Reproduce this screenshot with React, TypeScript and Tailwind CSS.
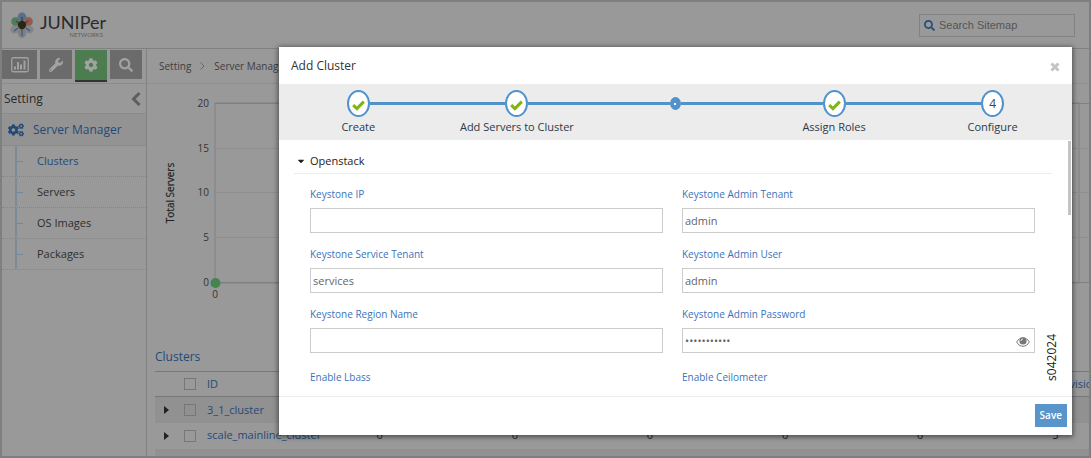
import React from "react";
import { FaCaretDown, FaCog, FaCogs, FaSearch, FaWrench } from "react-icons/fa";

const menu = ["Clusters", "Servers", "OS Images", "Packages"];
const clusters = [
  { name: "3_1_cluster", counts: ["0", "0", "0", "0", "0", ""] },
  { name: "scale_mainline_cluster", counts: ["0", "0", "0", "0", "0", "5"] },
  { name: "", counts: ["", "", "", "", "", ""] },
];
const steps = [
  { label: "Create", state: "done" },
  { label: "Add Servers to Cluster", state: "done" },
  { label: "", state: "dot" },
  { label: "Assign Roles", state: "done" },
  { label: "Configure", state: "current" },
];
const fields = [
  { id: "ip", label: "Keystone IP", value: "", type: "text" },
  { id: "tenant", label: "Keystone Admin Tenant", value: "admin", type: "text" },
  { id: "service", label: "Keystone Service Tenant", value: "services", type: "text" },
  { id: "user", label: "Keystone Admin User", value: "admin", type: "text" },
  { id: "region", label: "Keystone Region Name", value: "", type: "text" },
  { id: "password", label: "Keystone Admin Password", value: "contrail123", type: "password" },
];
const ticks = [
  { label: "20", y: 19 },
  { label: "15", y: 64 },
  { label: "10", y: 108 },
  { label: "5", y: 153 },
  { label: "0", y: 198 },
];

function Logo() {
  return (
    <a href="#home" aria-label="Juniper Networks" className="flex items-center gap-[6px] text-[#2b2b2b]">
      <svg width="24" height="28" viewBox="0 0 24 28">
        <g stroke="#858585" strokeWidth="0.4">
          <ellipse cx="5.500" cy="18" rx="4" ry="5" fill="#81868b" transform="rotate(60 5.500 18)" />
          <ellipse cx="18.500" cy="18" rx="4" ry="5" fill="#81848a" transform="rotate(-60 18.500 18)" />
          <ellipse cx="12" cy="22" rx="4" ry="5" fill="#7a8086" />
          <circle cx="12" cy="6" r="4.400" fill="#53708f" />
          <circle cx="5.500" cy="10.500" r="4.400" fill="#4f7d5c" />
          <circle cx="18.500" cy="10.500" r="4.400" fill="#955a50" />
        </g>
        <path d="M12 6v10M6 10l7 5M18 10l-7 5" stroke="#4d5148" strokeWidth="2" />
        <path d="M12 18v7M16 17l4 3M8 17l-4 3" stroke="#3f5a77" strokeWidth="1.200" />
        <circle cx="12" cy="14" r="4.200" fill="#2c2714" />
      </svg>
      <span className="flex flex-col items-end gap-px font-['Lato',sans-serif]">
        <span className="text-[18px] leading-[18px]">JUNIPer</span>
        <span className="pr-[3px] text-[6px] leading-[6px] text-[#5e5e5e]">NETWORKS</span>
      </span>
    </a>
  );
}

function BarsIcon() {
  return (
    <svg width="18" height="16" viewBox="0 0 18 16" fill="none" stroke="currentColor">
      <rect x="0.750" y="0.750" width="16.500" height="14" rx="1.500" strokeWidth="1.300" />
      <path d="M4 12.500V9.500M7 12.500V5M10 12.500V7.500M13.500 12.500V3.500" strokeWidth="2" />
    </svg>
  );
}

function CheckIcon() {
  return (
    <svg width="13" height="11" viewBox="0 0 13 11" fill="none" stroke="#80b414" strokeWidth="3" className="mt-[3px]">
      <path d="M1.200 5.200L4.900 8.600L11.800 1.600" />
    </svg>
  );
}

function EyeIcon() {
  return (
    <svg width="14" height="12" viewBox="0 0 14 12" fill="none">
      <path d="M0.700 6C3.600 0.300 10.400 0.300 13.300 6C10.400 11.700 3.600 11.700 0.700 6Z" stroke="#777" strokeWidth="1" />
      <circle cx="7" cy="5" r="3.600" fill="#777" />
      <path d="M5 5a2 2 0 0 1 2-2" stroke="#fff" strokeWidth="0.800" />
    </svg>
  );
}

function Sidebar() {
  return (
    <aside className="w-[145px] shrink-0 border-r border-[#828282]">
      <nav className="flex h-[35px] gap-[3px] border-b border-[#8a8a8a] pt-px pr-[4px]" aria-label="Sections">
        <button aria-label="Monitor" className="flex h-[29px] w-[35px] items-center justify-center bg-[#6b6b6b] text-[#a2a2a2]"><BarsIcon /></button>
        <button aria-label="Configure" className="flex h-[29px] flex-1 items-center justify-center bg-[#6b6b6b] text-[#a2a2a2]"><FaWrench size={14} /></button>
        <button aria-label="Setting" className="flex h-[32px] flex-1 items-center justify-center border-b-2 border-[#333] bg-[#4b7d50] text-[#a2a2a2]"><FaCog size={14} /></button>
        <button aria-label="Query" className="flex h-[29px] flex-1 items-center justify-center bg-[#6b6b6b] text-[#a2a2a2]"><FaSearch size={14} /></button>
      </nav>
      <div className="flex h-[30px] items-center justify-between border-b border-[#8a8a8a] pr-[5px] pl-[2px] text-[12px] text-[#2b2b2b]">
        Setting
        <button aria-label="Collapse">
          <svg width="10" height="14" viewBox="0 0 10 14" fill="none" stroke="#5e5e5e" strokeWidth="3"><path d="M8.500 1L2.500 7L8.500 13" /></svg>
        </button>
      </div>
      <a href="#servers" className="flex h-[32px] items-center gap-[9px] border-b border-[#8a8a8a] bg-[#939393] pl-[6px] text-[12px] text-[#1f4a78]">
        <FaCogs size={16} />
        Server Manager
      </a>
      <ul>
        {menu.map((m, i) => (
          <li key={m} className="border-b border-dotted border-[#858585] pl-[13px]">
            <a href={"#" + m} className={"flex h-[30px] items-center gap-[14px] border-l-2 border-[#7b8b98] text-[11px] " + (i === 0 ? "text-[#1f4a78]" : "text-[#2e2e2e]")}>
              <span className="h-px w-[6px] bg-[#71879a]" />
              {m}
            </a>
          </li>
        ))}
      </ul>
    </aside>
  );
}

function Chart() {
  return (
    <svg className="block h-[258px] w-full" role="img" aria-label="Total Servers">
      <rect x="68" y="19" width="864" height="180" fill="none" stroke="#828282" />
      {ticks.map((t) => (
        <g key={t.label}>
          <line x1="68" x2="100%" y1={t.y + 0.5} y2={t.y + 0.5} stroke={t.label === "0" || t.label === "20" ? "#808080" : "#8e8e8e"} />
          <text x="62" y={t.y + 4} textAnchor="end" fontSize="10" fill="#333">{t.label}</text>
        </g>
      ))}
      <text transform="translate(27 109) rotate(-90)" textAnchor="middle" fontSize="10" fill="#222" stroke="#222" strokeWidth="0.200">Total Servers</text>
      <text x="68" y="214" textAnchor="middle" fontSize="10" fill="#333">0</text>
      <circle cx="68.500" cy="199" r="5" fill="#468350" />
    </svg>
  );
}

function Clusters() {
  return (
    <section className="pl-2">
      <h2 className="h-[29px] pt-[7px] text-[12px] leading-4 text-[#1f4a78]">Clusters</h2>
      <table className="w-[968px] table-fixed border-collapse text-[11px]">
        <colgroup>
          <col className="w-[23px]" />
          <col className="w-[29px]" />
          <col className="w-[105px]" />
          {clusters[0].counts.map((_, i) => <col key={i} className="w-[135px]" />)}
        </colgroup>
        <thead>
          <tr className="h-[25px] border-y border-[#777] text-left text-[#1f4a78]">
            <th />
            <th className="px-[6px]"><input type="checkbox" aria-label="Select all" className="block size-3 appearance-none border border-[#777]" /></th>
            <th className="font-normal">ID</th>
            <th /><th /><th /><th /><th />
            <th className="pl-[64px] font-normal">Provisioned</th>
          </tr>
        </thead>
        <tbody>
          {clusters.map((c, r) => (
            <tr key={r} className="h-[26px] odd:bg-[#919191]">
              <td className="pl-[9px]">{c.name && <span className="block h-0 w-0 border-y-[4px] border-l-[5px] border-y-transparent border-l-[#222]" />}</td>
              <td className="px-[6px]"><input type="checkbox" aria-label={"Select " + c.name} className="block size-3 appearance-none border border-[#777]" /></td>
              <td className="whitespace-nowrap text-[#1f4a78]"><a href="#cluster">{c.name}</a></td>
              {c.counts.map((n, i) => <td key={i} className="text-center text-[#222]">{n}</td>)}
            </tr>
          ))}
        </tbody>
      </table>
    </section>
  );
}

function Steps() {
  return (
    <ol className="flex h-[56px] shrink-0 bg-[#ececec] pt-[6px] text-[11px] text-[#2b3a48]">
      {steps.map((s, i) => (
        <li key={i} className="flex flex-1 flex-col items-center">
          <div className="flex h-[27px] w-full items-center">
            <span className={"h-[3px] flex-1 " + (i > 0 ? "bg-[#5292cb]" : "")} />
            {s.state === "dot" ? (
              <span className="flex h-[13px] w-[11px] items-center justify-center rounded-[50%] bg-[#5292cb]"><span className="size-[2px] bg-white" /></span>
            ) : (
              <span className="flex h-[27px] w-[23px] items-center justify-center rounded-[50%] border-2 border-[#5292cb] bg-white text-[12px] text-[#444]">
                {s.state === "done" ? <CheckIcon /> : "4"}
              </span>
            )}
            <span className={"h-[3px] flex-1 " + (i < steps.length - 1 ? "bg-[#5292cb]" : "")} />
          </div>
          <span className="mt-[2px] leading-4">{s.label}</span>
        </li>
      ))}
    </ol>
  );
}

function Dialog() {
  return (
    <div role="dialog" aria-label="Add Cluster" className="absolute top-[45px] right-[17px] bottom-[21px] left-[277px] flex flex-col bg-white shadow-[0_1px_5px_1px_rgba(0,0,0,0.5)]">
      <header className="flex h-[37px] shrink-0 items-center justify-between pr-[12px] pl-[12px] text-[12px] text-[#333]">
        <h1>Add Cluster</h1>
        <button aria-label="Close" className="mt-[2px]">
          <svg width="10" height="10" viewBox="0 0 10 10" stroke="#c4c4c4" strokeWidth="3"><path d="M1.500 1.500L8.500 8.500M8.500 1.500L1.500 8.500" /></svg>
        </button>
      </header>
      <Steps />
      <div className="relative min-h-0 flex-1 overflow-hidden pr-[20px] pl-[15px]">
        <h2 className="flex h-[34px] items-center gap-[4px] border-b border-[#ececec] pt-[9px] pl-[2px] text-[11px] text-[#222]">
          <FaCaretDown size={10} />
          Openstack
        </h2>
        <div className="grid grid-cols-2 gap-x-[19px] pt-[12px] pr-[17px] pl-[16px]">
          {fields.map((f) => (
            <div key={f.id} className="relative h-[60px]">
              <label htmlFor={f.id} className="block h-[22px] text-[10px] leading-4 text-[#3b73b9]">{f.label}</label>
              <input id={f.id} type={f.type} defaultValue={f.value} className="block h-[25px] w-full border border-[#ccc] bg-white px-[2px] text-[11px] text-[#666] outline-none" />
              {f.type === "password" && (
                <button aria-label="Show password" className="absolute top-[30px] right-[5px]"><EyeIcon /></button>
              )}
            </div>
          ))}
          <span className="pt-[3px] text-[10px] leading-4 text-[#3b73b9]">Enable Lbass</span>
          <span className="pt-[3px] text-[10px] leading-4 text-[#3b73b9]">Enable Ceilometer</span>
        </div>
        <span className="absolute top-px right-px h-[74px] w-[3px] bg-[#c4c4c4]" />
        <span className="absolute right-[12px] bottom-[15px] rotate-180 text-[12px] leading-4 text-[#222] [writing-mode:vertical-rl]">s042024</span>
      </div>
      <footer className="flex h-[39px] shrink-0 items-center justify-end border-t border-[#ececec] pr-[5px] pb-[2px]">
        <button className="h-[23px] bg-[#5895cb] px-[5px] text-[10px] font-semibold text-white">Save</button>
      </footer>
    </div>
  );
}

export default function App() {
  return (
    <div className="relative flex h-screen flex-col overflow-hidden border-2 border-[#7e7f7f] bg-[#999] font-['Open_Sans','Noto_Sans',sans-serif]">
      <header className="flex h-[47px] shrink-0 items-center justify-between border-b border-[#808080] pr-[14px] pl-[8px]">
        <Logo />
        <label className="flex h-[23px] w-[156px] items-center gap-[4px] border border-[#828282] px-[4px] text-[#244f7c]">
          <FaSearch size={11} />
          <input type="search" aria-label="Search Sitemap" placeholder="Search Sitemap" className="min-w-0 flex-1 bg-transparent font-['Liberation_Sans',sans-serif] text-[11px] outline-none placeholder:text-[#555]" />
        </label>
      </header>
      <div className="flex min-h-0 flex-1">
        <Sidebar />
        <main className="min-w-0 flex-1 overflow-hidden">
          <nav aria-label="Breadcrumb" className="flex h-[35px] items-center gap-[9px] border-b border-[#8e8e8e] pl-[12px] text-[10px] text-[#3d3d3d]">
            <a href="#setting">Setting</a>
            <svg width="5" height="8" viewBox="0 0 5 8" fill="none" stroke="#666"><path d="M0.500 0.500L4 4L0.500 7.500" /></svg>
            <a href="#manager">Server Manager</a>
          </nav>
          <Chart />
          <Clusters />
        </main>
      </div>
      <Dialog />
    </div>
  );
}
